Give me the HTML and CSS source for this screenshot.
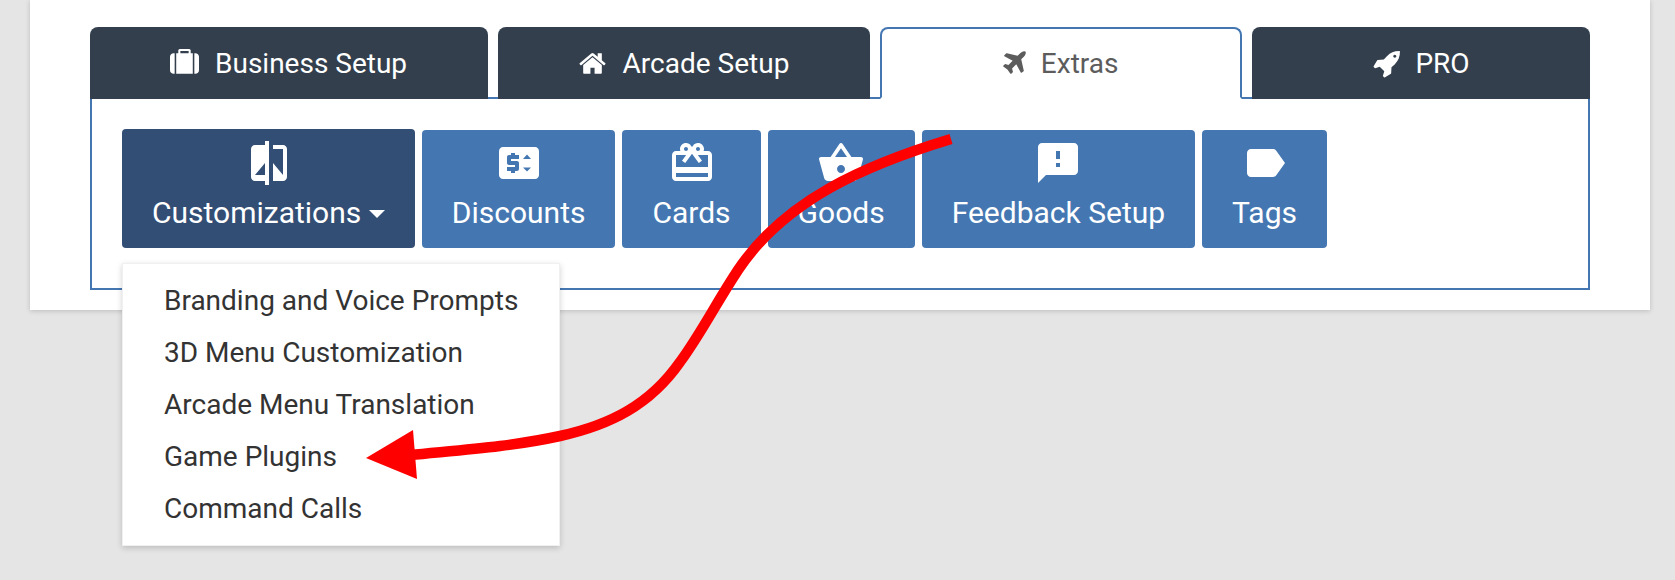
FILE: index.html
```html
<!DOCTYPE html>
<html lang="en">
<head>
<meta charset="utf-8">
<title>Extras</title>
<link rel="stylesheet" href="styles.css">
</head>
<body>
<main class="panel">
  <nav class="tabs">
    <a class="tab"><svg class="tab-icon" viewBox="0 0 1792 1792"><path d="M640 256h512v-128h-512v128zm-352 0v1280h-64q-92 0-158-66t-66-158v-832q0-92 66-158t158-66h64zm1120 0v1280h-1024v-1280h128v-160q0-40 28-68t68-28h576q40 0 68 28t28 68v160h128zm384 224v832q0 92-66 158t-158 66h-64v-1280h64q92 0 158 66t66 158z"/></svg>Business Setup</a>
    <a class="tab"><svg class="tab-icon" viewBox="0 0 1792 1792"><path d="M1472 992v480q0 26-19 45t-45 19h-384v-384h-256v384h-384q-26 0-45-19t-19-45v-480q0-1 .5-3t.5-3l575-474 575 474q1 2 1 6zm223-69l-62 74q-8 9-21 11h-3q-13 0-21-7l-692-577-692 577q-12 8-24 7-13-2-21-11l-62-74q-8-10-7-23.5t11-21.5l719-599q32-26 76-26t76 26l244 204v-195q0-14 9-23t23-9h192q14 0 23 9t9 23v408l219 182q10 8 11 21.5t-7 23.5z"/></svg>Arcade Setup</a>
    <a class="tab tab-active"><svg class="tab-icon" viewBox="0 0 1792 1792"><path d="M1568 160q44 52 12 148t-108 172l-161 161 160 696q5 19-12 33l-128 96q-7 6-19 6-4 0-7-1-15-3-21-16l-279-508-259 259 53 194q5 17-8 31l-96 96q-9 9-23 9h-2q-15-2-24-13l-189-252-252-189q-11-7-13-23-1-13 9-25l96-97q9-9 23-9 6 0 8 1l194 53 259-259-508-279q-14-8-17-24-2-16 9-27l128-128q14-13 30-8l665 159 160-160q76-76 172-108t148 12z"/></svg>Extras</a>
    <a class="tab tab-wide"><svg class="tab-icon" viewBox="0 0 1792 1792"><path d="M1504 448q0-40-28-68t-68-28-68 28-28 68 28 68 68 28 68-28 28-68zm224-288q0 249-75.5 430.5t-253.5 360.5q-81 80-195 176l-20 379q-2 16-16 26l-384 224q-7 4-16 4-12 0-23-9l-64-64q-13-14-8-32l85-276-281-281-276 85q-3 1-9 1-14 0-23-9l-64-64q-17-19-5-39l224-384q10-14 26-16l379-20q96-114 176-195 188-187 358-258t431-71q14 0 24 9.5t10 22.5z"/></svg>PRO</a>
  </nav>
  <section class="content">
    <div class="dropdown">
      <a class="btn btn-open">
        <svg class="btn-icon" viewBox="0 0 24 24"><path d="M10 3H5c-1.1 0-2 .9-2 2v14c0 1.1.9 2 2 2h5v2h2V1h-2v2zm0 15H5l5-6v6zm9-15h-5v2h5v13l-5-6v9h5c1.1 0 2-.9 2-2V5c0-1.1-.9-2-2-2z"/></svg>
        <span class="btn-label">Customizations<i class="caret"></i></span>
      </a>
      <ul class="menu">
        <li>Branding and Voice Prompts</li>
        <li>3D Menu Customization</li>
        <li>Arcade Menu Translation</li>
        <li>Game Plugins</li>
        <li>Command Calls</li>
      </ul>
    </div>
    <a class="btn">
      <svg class="btn-icon" viewBox="0 0 24 24"><path d="M20 4H4c-1.11 0-1.99.89-1.99 2L2 18c0 1.11.89 2 2 2h16c1.11 0 2-.89 2-2V6c0-1.11-.89-2-2-2zm-8 6H8v1h3c.55 0 1 .45 1 1v3c0 .55-.45 1-1 1h-1v1H8v-1H6v-2h4v-1H7c-.55 0-1-.45-1-1V9c0-.55.45-1 1-1h1V7h2v1h2v2zm4 6.25l-2-2h4l-2 2zM14 10l2-2.25L18 10h-4z"/></svg>
      <span class="btn-label">Discounts</span>
    </a>
    <a class="btn">
      <svg class="btn-icon" viewBox="0 0 24 24"><path d="M20 6h-2.18c.11-.31.18-.65.18-1 0-1.66-1.34-3-3-3-1.05 0-1.96.54-2.5 1.35l-.5.67-.5-.68C10.96 2.54 10.05 2 9 2 7.34 2 6 3.34 6 5c0 .35.07.69.18 1H4c-1.11 0-1.99.89-1.99 2L2 19c0 1.11.89 2 2 2h16c1.11 0 2-.89 2-2V8c0-1.11-.89-2-2-2zm-5-2c.55 0 1 .45 1 1s-.45 1-1 1-1-.45-1-1 .45-1 1-1zM9 4c.55 0 1 .45 1 1s-.45 1-1 1-1-.45-1-1 .45-1 1-1zm11 15H4v-2h16v2zm0-5H4V8h5.08L7 10.83 8.62 12 11 8.76l1-1.36 1 1.36L15.38 12 17 10.83 14.92 8H20v6z"/></svg>
      <span class="btn-label">Cards</span>
    </a>
    <a class="btn">
      <svg class="btn-icon" viewBox="0 0 24 24"><path d="M17.21 9l-4.38-6.56c-.19-.28-.51-.42-.83-.42-.32 0-.64.14-.83.43L6.79 9H2c-.55 0-1 .45-1 1 0 .09.01.18.04.27l2.54 9.27c.23.84 1 1.46 1.92 1.46h13c.92 0 1.69-.62 1.93-1.46l2.54-9.27L23 10c0-.55-.45-1-1-1h-4.79zM9 9l3-4.4L15 9H9zm3 8c-1.1 0-2-.9-2-2s.9-2 2-2 2 .9 2 2-.9 2-2 2z"/></svg>
      <span class="btn-label">Goods</span>
    </a>
    <a class="btn">
      <svg class="btn-icon" viewBox="0 0 24 24"><path d="M20 2H4c-1.1 0-1.99.9-1.99 2L2 22l4-4h14c1.1 0 2-.9 2-2V4c0-1.1-.9-2-2-2zm-7 12h-2v-2h2v2zm0-4h-2V6h2v4z"/></svg>
      <span class="btn-label">Feedback Setup</span>
    </a>
    <a class="btn">
      <svg class="btn-icon" viewBox="0 0 24 24"><path d="M17.63 5.84C17.27 5.33 16.67 5 16 5L5 5.01C3.9 5.01 3 5.9 3 7v10c0 1.1.9 1.99 2 1.99L16 19c.67 0 1.27-.33 1.63-.84L22 12l-4.37-6.16z"/></svg>
      <span class="btn-label">Tags</span>
    </a>
  </section>
</main>
<svg class="annotation" viewBox="0 0 1675 580">
  <path class="annotation-line" d="M951 139C865 165 785 200 738 270C715 305 700 335 680 362C650 405 610 425 560 436C510 447 460 450 410 455"/>
  <polygon class="annotation-head" points="366,458 413,430 417,479"/>
</svg>
</body>
</html>
```
FILE: styles.css
```css
* {
  box-sizing: border-box;
}

html,
body {
  margin: 0;
  height: 580px;
  overflow: hidden;
}

body {
  position: relative;
  background: #e5e5e5;
  font-family: Roboto, "Liberation Sans", sans-serif;
}

.panel {
  height: 310px;
  margin: 0 25px 0 30px;
  padding: 27px 60px 0;
  background: #fff;
  box-shadow: 0 1px 5px rgba(0, 0, 0, 0.18);
}

.tabs {
  position: relative;
  z-index: 1;
  display: flex;
  gap: 10px;
  height: 72px;
  margin-bottom: -2px;
}

.tab {
  flex: none;
  display: flex;
  align-items: center;
  gap: 16px;
  padding: 0 80.5px 0 80px;
  border-radius: 8px 8px 0 0;
  background: #333f4d;
  color: #fff;
  font-size: 28px;
  white-space: nowrap;
}

.tab-icon {
  width: 29px;
  height: 29px;
  fill: currentColor;
}

.tab-wide {
  gap: 14px;
  padding: 0 120px;
}

.tab-active {
  gap: 12px;
  padding: 0 122px 0 118px;
  border: 2px solid #4477b2;
  border-bottom-color: #fff;
  background: #fff;
  color: #5c5c5c;
}

.content {
  display: flex;
  align-items: flex-end;
  gap: 7px;
  height: 193px;
  padding: 0 30px 40px;
  border: 2px solid #4477b2;
}

.dropdown {
  position: relative;
}

.btn {
  display: flex;
  flex-direction: column;
  align-items: center;
  height: 118px;
  padding: 9px 30px 0;
  border-radius: 4px;
  background: #4477b2;
  color: #fff;
  font-size: 30px;
}

.btn-open {
  height: 119px;
  padding: 10px 29.5px 0 30px;
  background: #324e75;
}

.btn-icon {
  flex: none;
  width: 48px;
  height: 48px;
  fill: currentColor;
}

.btn-label {
  display: flex;
  align-items: center;
  line-height: 52px;
  white-space: nowrap;
}

.caret {
  width: 0;
  height: 0;
  margin: 2px 0 0 8px;
  border-top: 8px solid #fff;
  border-left: 8px solid transparent;
  border-right: 8px solid transparent;
}

.menu {
  position: absolute;
  top: calc(100% + 15px);
  left: 0;
  width: 438px;
  margin: 0;
  padding: 11px 0 10px;
  list-style: none;
  background: #fff;
  border: 1px solid #f0f0f0;
  box-shadow: 0 2px 6px rgba(0, 0, 0, 0.18);
  color: #333;
  font-size: 28px;
}

.menu li {
  padding: 0 41px;
  line-height: 52px;
  white-space: nowrap;
}

.annotation {
  position: absolute;
  top: 0;
  left: 0;
  z-index: 2;
  width: 1675px;
  height: 580px;
  pointer-events: none;
}

.annotation-line {
  fill: none;
  stroke: #f00;
  stroke-width: 10.5;
}

.annotation-head {
  fill: #f00;
}
```
